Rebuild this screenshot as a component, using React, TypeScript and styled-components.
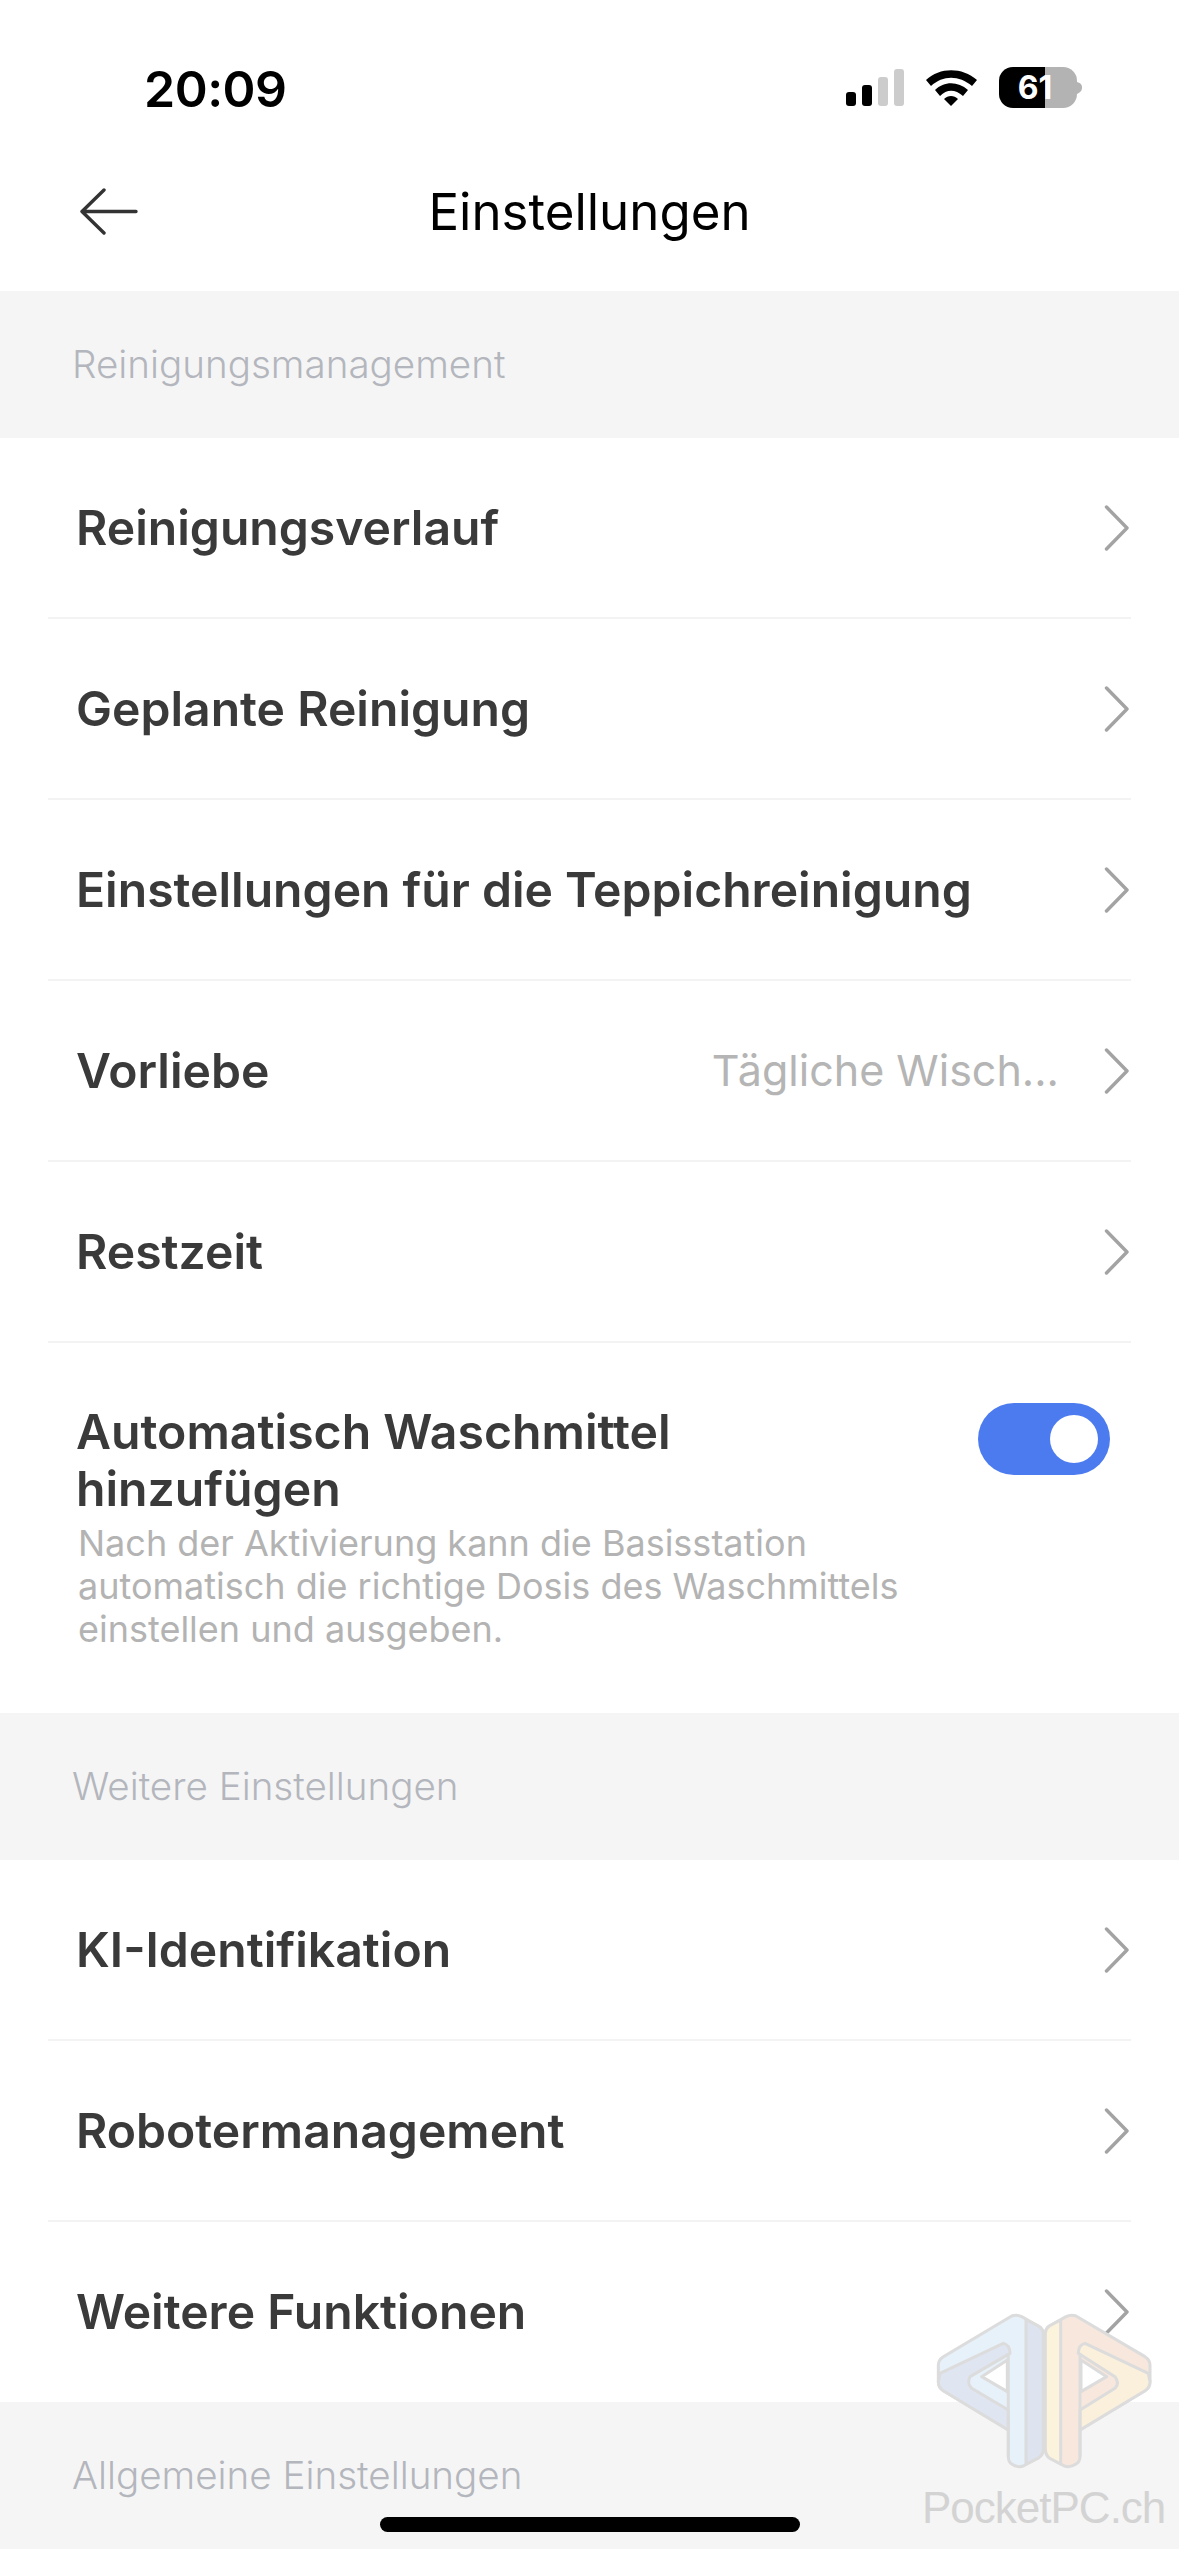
import React from "react";
import styled, { createGlobalStyle } from "styled-components";

const Global = createGlobalStyle`
  html, body { margin: 0; padding: 0; background: #fff; }
  * { box-sizing: border-box; }
`;

const Page = styled.div`
  position: relative;
  width: 1179px;
  height: 2556px;
  overflow: hidden;
  background: #fff;
  font-family: Inter, "Liberation Sans", sans-serif;
`;
const StatusBar = styled.div`
  height: 150px;
  display: flex;
  align-items: flex-start;
  justify-content: space-between;
  padding: 63px 97px 0 144px;
`;
const Time = styled.div`
  font-size: 50px;
  line-height: 52px;
  font-weight: 600;
  color: #000;
  letter-spacing: -0.5px;
`;
const StatusIconWrap = styled.div`
  display: flex;
  margin-top: 4px;
`;
const NavBar = styled.div`
  height: 141px;
  display: grid;
  grid-template-columns: 1fr auto 1fr;
  align-items: center;
  padding: 0 80px 18px;
`;
const Title = styled.div`
  font-size: 51px;
  line-height: 60px;
  font-weight: 400;
  color: #000;
`;
const SectionBand = styled.div`
  height: 147px;
  background: #f5f5f5;
  display: flex;
  align-items: center;
  padding: 0 0 2px 72px;
  font-size: 38.6px;
  font-weight: 300;
  color: #b4b6bd;
`;
const List = styled.div`
  padding: 0 48px;
`;
const Row = styled.div`
  height: 181px;
  display: flex;
  align-items: center;
  padding: 0 2px 0 28px;
  border-bottom: 2px solid #f3f3f3;
  &:last-child {
    border-bottom: 0;
    height: 180px;
    padding-bottom: 1px;
  }
`;
const RowLabel = styled.div`
  flex: 1;
  font-size: 48.1px;
  font-weight: 600;
  color: #3a3a3a;
`;
const RowValue = styled.div`
  font-size: 43px;
  line-height: 50px;
  padding-bottom: 2px;
  font-weight: 400;
  color: #b5b5b5;
  margin-right: 45px;
`;
const ToggleRow = styled.div`
  height: 370px;
  display: flex;
  align-items: flex-start;
  justify-content: space-between;
  padding: 60px 21px 0 28px;
`;
const ToggleText = styled.div`
  width: 860px;
`;
const ToggleTitle = styled.div`
  font-size: 48.2px;
  line-height: 57px;
  font-weight: 600;
  color: #3a3a3a;
  max-width: 720px;
`;
const ToggleDesc = styled.div`
  margin: 5px 0 0 2px;
  font-size: 36px;
  line-height: 43px;
  font-weight: 400;
  color: #b3b3b3;
`;
const Toggle = styled.div`
  width: 132px;
  height: 72px;
  border-radius: 36px;
  background: #4c7bf0;
  display: flex;
  align-items: center;
  justify-content: flex-end;
  padding-right: 12px;
`;
const Knob = styled.div`
  width: 48px;
  height: 48px;
  border-radius: 50%;
  background: #fff;
`;
const HomeIndicator = styled.div`
  position: absolute;
  left: 380px;
  top: 2517px;
  width: 420px;
  height: 15px;
  border-radius: 8px;
  background: #000;
`;
const Watermark = styled.div`
  position: absolute;
  left: 780px;
  top: 2180px;
  width: 399px;
  height: 376px;
`;
const WatermarkText = styled.div`
  position: absolute;
  left: 142px;
  top: 300px;
  font-family: "Liberation Sans", Arial, sans-serif;
  font-size: 44px;
  letter-spacing: -1px;
  line-height: 56px;
  color: #d3d3d3;
  white-space: nowrap;
`;

const Chevron = () => (
  <svg width="25" height="46" viewBox="0 0 25 46" fill="none">
    <path d="M2.5 2 L23 23 L2.5 44" stroke="#a3a3a3" strokeWidth="3.4" strokeLinecap="round" strokeLinejoin="round" />
  </svg>
);

const BackArrow = () => (
  <svg width="58" height="48" viewBox="0 0 58 48" fill="none">
    <path d="M24 2 L2 23.5 L24 45 M2 23.5 H56" stroke="#333" strokeWidth="3.4" strokeLinecap="round" strokeLinejoin="round" />
  </svg>
);

const StatusIcons = () => (
  <svg width="236" height="42" viewBox="0 0 236 42">
    <rect x="0" y="25" width="10" height="14" rx="3" fill="#000" />
    <rect x="16" y="18" width="10" height="21" rx="3" fill="#000" />
    <rect x="32" y="10" width="10" height="29" rx="3" fill="#ccc" />
    <rect x="48" y="2" width="10" height="37" rx="3" fill="#ccc" />
    <path d="M80 13 C94 0 116 0 131 13 L126 19 C113 8 97 8 85 19 Z" fill="#000" />
    <path d="M89 23 C98 14 112 14 122 23 L117 29 C109 22 101 22 94 29 Z" fill="#000" />
    <path d="M98 32 C102 28 108 28 112 32 L105 39 Z" fill="#000" />
    <path d="M167 0 H199 V41 H167 A14 14 0 0 1 153 27 V14 A14 14 0 0 1 167 0 Z" fill="#000" />
    <path d="M199 0 H217 A14 14 0 0 1 231 14 V27 A14 14 0 0 1 217 41 H199 Z" fill="#b3b3b3" />
    <path d="M231 15 C235 16 236 18 236 20.5 C236 23 235 25 231 27 Z" fill="#b3b3b3" />
    <text x="189" y="32" textAnchor="middle" fontFamily="Inter, sans-serif" fontWeight="700" fontSize="32" fill="#fff">61</text>
  </svg>
);

const Logo = () => (
  <svg width="399" height="376" viewBox="0 0 1197 1128" fill="none" strokeLinejoin="round">
    <g stroke="#dcdcdc" strokeWidth="9">
      <path fillRule="evenodd" fill="#e7f1f9" d="M695 408 Q710 402 725 410 L775 438 Q790 447 790 462 V805 Q790 825 775 834 L730 858 Q712 864 695 852 Q685 845 685 830 V750 L490 632 Q475 622 475 605 V555 Q475 540 490 530 Z M605 590 L682 635 V540 Z" />
      <path fill="#dde3ef" d="M738 420 L775 438 Q790 447 790 462 V805 Q790 825 775 834 L738 852 Z" />
      <path fill="#dfe6f1" d="M480 580 L670 490 Q690 495 690 520 L570 590 Q560 610 575 625 L685 690 V750 L490 632 Q475 622 475 605 Z" />
      <path d="M685 520 V830" />
    </g>
    <g stroke="#dcdcdc" strokeWidth="9">
      <path fillRule="evenodd" fill="#f7e7dc" d="M888 408 Q873 402 858 410 L808 438 Q796 447 796 462 V805 Q796 825 808 834 L853 858 Q871 864 888 852 Q900 845 900 830 V750 L1095 632 Q1110 622 1110 605 V555 Q1110 540 1095 530 Z M980 590 L903 635 V540 Z" />
      <path fill="#fbf3dc" d="M842 420 L808 438 Q796 447 796 462 V805 Q796 825 808 834 L842 852 Z" />
      <path fill="#faf0dc" d="M1105 580 L915 490 Q895 495 895 520 L1005 590 Q1020 610 1005 625 L900 690 V750 L1095 632 Q1110 622 1110 605 Z" />
      <path d="M900 520 V830" />
    </g>
  </svg>
);

const first = [
  { label: "Reinigungsverlauf" },
  { label: "Geplante Reinigung" },
  { label: "Einstellungen für die Teppichreinigung" },
  { label: "Vorliebe", value: "Tägliche Wisch..." },
  { label: "Restzeit" },
];
const second = ["KI-Identifikation", "Robotermanagement", "Weitere Funktionen"];

export default function App() {
  return (
    <Page>
      <Global />
      <StatusBar>
        <Time>20:09</Time>
        <StatusIconWrap>
          <StatusIcons />
        </StatusIconWrap>
      </StatusBar>
      <NavBar>
        <BackArrow />
        <Title>Einstellungen</Title>
        <span />
      </NavBar>
      <SectionBand>Reinigungsmanagement</SectionBand>
      <List>
        {first.map((r) => (
          <Row key={r.label}>
            <RowLabel>{r.label}</RowLabel>
            {r.value && <RowValue>{r.value}</RowValue>}
            <Chevron />
          </Row>
        ))}
        <ToggleRow>
          <ToggleText>
            <ToggleTitle>Automatisch Waschmittel hinzufügen</ToggleTitle>
            <ToggleDesc>
              Nach der Aktivierung kann die Basisstation automatisch die richtige Dosis des Waschmittels einstellen und ausgeben.
            </ToggleDesc>
          </ToggleText>
          <Toggle>
            <Knob />
          </Toggle>
        </ToggleRow>
      </List>
      <SectionBand>Weitere Einstellungen</SectionBand>
      <List>
        {second.map((l) => (
          <Row key={l}>
            <RowLabel>{l}</RowLabel>
            <Chevron />
          </Row>
        ))}
      </List>
      <SectionBand>Allgemeine Einstellungen</SectionBand>
      <Watermark>
        <Logo />
        <WatermarkText>PocketPC.ch</WatermarkText>
      </Watermark>
      <HomeIndicator />
    </Page>
  );
}
